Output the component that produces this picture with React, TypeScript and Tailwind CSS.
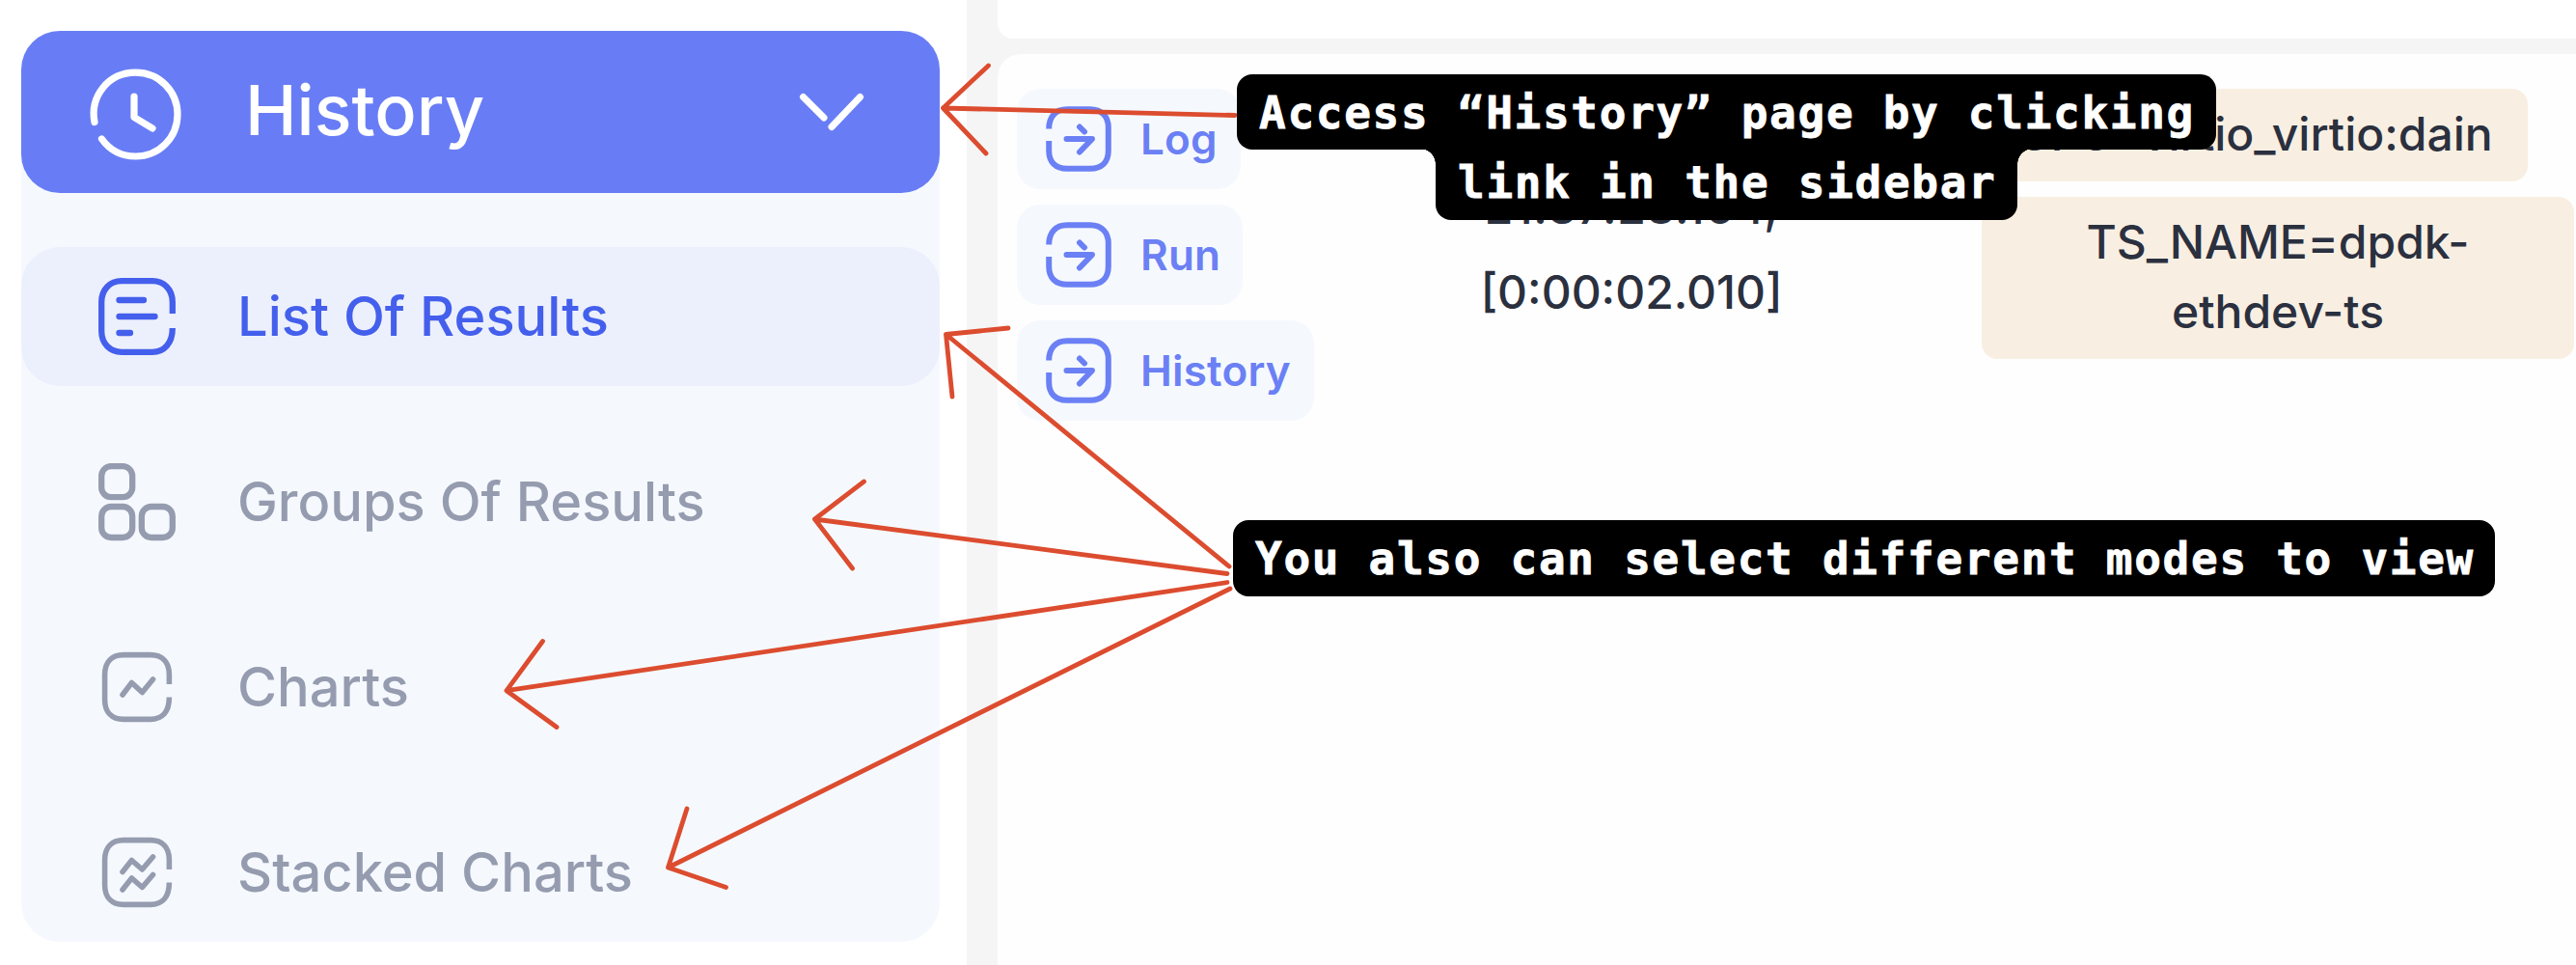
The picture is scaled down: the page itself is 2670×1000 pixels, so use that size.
import type { ReactNode } from "react";

const inter = "font-['Inter','Liberation_Sans',sans-serif]";
const mono =
  "font-['DejaVu_Sans_Mono','Liberation_Mono',monospace] text-[46px] leading-[72px] font-bold tracking-[1.7px] whitespace-nowrap text-white [-webkit-text-stroke:0.8px_white]";

function Icon({ size, stroke, className, children }: { size: number; stroke: number; className: string; children: ReactNode }) {
  return (
    <svg
      viewBox={`0 0 ${size} ${size}`}
      className={`overflow-visible ${className}`}
      fill="none"
      stroke="currentColor"
      strokeWidth={stroke}
      strokeLinecap="round"
      strokeLinejoin="round"
    >
      {children}
    </svg>
  );
}

function ListIcon() {
  return (
    <Icon size={96} stroke={6.3} className="size-24 shrink-0">
      <path strokeLinecap="butt" d="M84.8 45V33C84.8 20 76 11.2 64 11.2H32C20 11.2 11.2 20 11.2 33V63C11.2 76 20 84.8 32 84.8H64C76 84.8 84.8 76 84.8 60" />
      <path d="M29.5 31H55M29.5 48H66.5M29.5 65H41" />
    </Icon>
  );
}

function GroupsIcon() {
  return (
    <Icon size={96} stroke={6.3} className="size-24 shrink-0">
      <rect x="11.2" y="11.2" width="32" height="32" rx="10" />
      <rect x="11.2" y="53" width="32" height="32" rx="10" />
      <rect x="52.8" y="53" width="32" height="32" rx="10" />
    </Icon>
  );
}

function ChartsIcon() {
  return (
    <Icon size={96} stroke={5.6} className="size-24 shrink-0">
      <path strokeLinecap="butt" d="M81.4 45V35C81.4 22 74 14.6 62 14.6H34C22 14.6 14.6 22 14.6 35V61C14.6 74 22 81.4 34 81.4H62C74 81.4 81.4 74 81.4 58.5" />
      <path d="M33 56L42.5 43.5L53.4 53.5L64.5 40" />
    </Icon>
  );
}

function StackedIcon() {
  return (
    <Icon size={96} stroke={5.6} className="size-24 shrink-0">
      <path strokeLinecap="butt" d="M81.4 45V35C81.4 22 74 14.6 62 14.6H34C22 14.6 14.6 22 14.6 35V61C14.6 74 22 81.4 34 81.4H62C74 81.4 81.4 74 81.4 58.5" />
      <path d="M33 47.5L42.5 35.5L53.4 45L64.5 32M33 66L42.5 54L53.4 63.5L64.5 50.5" />
    </Icon>
  );
}

function NavItem({ icon, label, active }: { icon: ReactNode; label: string; active?: boolean }) {
  return (
    <div
      className={`flex h-36 items-center gap-14 rounded-[40px] pl-18 text-[56px] leading-none font-medium ${
        active ? "bg-[#ecf0fc] text-[#445fec]" : "text-[#969caf]"
      }`}
    >
      {icon}
      <span className="whitespace-nowrap">{label}</span>
    </div>
  );
}

function LinkButton({ label, width }: { label: string; width: string }) {
  return (
    <div className={`flex h-[104px] items-center rounded-3xl bg-[#f5f9fe] pl-[30px] text-[#6b80f4] ${width}`}>
      <Icon size={68} stroke={6} className="size-[68px] shrink-0">
        <path strokeLinecap="butt" d="M3.2 23.5C3.2 11 10 3.2 22 3.2H46C58 3.2 64.8 11 64.8 22V46C64.8 58 58 64.8 46 64.8H22C10 64.8 3.2 58 3.2 46V36" />
        <path d="M21.5 34H48L35 47.5M35 21.5L40 26.5" />
      </Icon>
      <span className="ml-[30px] text-[44px] leading-none font-semibold tracking-[0.2px]">{label}</span>
    </div>
  );
}

function Arrows() {
  return (
    <svg
      viewBox="0 0 2670 1000"
      className="absolute inset-0 h-[1000px] w-[2670px]"
      fill="none"
      stroke="#dc4c2f"
      strokeWidth="4.8"
      strokeLinecap="round"
      strokeLinejoin="round"
    >
      <path d="M1280 119.5L977.5 112M1024.5 68L977.5 112L1022 159" />
      <path d="M1274 587L980.5 346.5M1045 340L980.5 346.5L987 411" />
      <path d="M1272 594.5L844.5 538M895.5 499L844.5 538L883.5 589" />
      <path d="M1272 603.5L525 715.7M562.5 664.5L525 715.7L577 753.5" />
      <path d="M1275 610L692.5 899M712 838L692.5 899L752.5 919.5" />
    </svg>
  );
}

export default function App() {
  return (
    <div className={`relative flex h-[1000px] w-[2670px] overflow-hidden bg-[#f5f5f5] ${inter}`}>
      <aside className="h-full w-[1002px] shrink-0 bg-white pt-8 pl-[22px]">
        <nav className="h-[944px] w-[952px] rounded-[40px] bg-[#f5f9fe]">
          <div className="flex h-42 items-center rounded-[40px] bg-[#687df5] text-white">
            <Icon size={96} stroke={7.2} className="ml-[70px] size-24 shrink-0">
              <path d="M6 58.5C1 32 20 7.2 48.5 7.2C73 7.2 92 26.5 92 50.5C92 74.5 73 94 48.5 94C33 94 21 86.5 13.5 76" />
              <path d="M47 32V53.5L66 65" />
            </Icon>
            <span className="ml-[66px] pb-1 text-[72px] leading-none font-medium">History</span>
            <Icon size={72} stroke={7} className="mr-[76px] ml-auto size-18">
              <path d="M6.5 20.5L28 42M36 51.5L65.5 20.5" />
            </Icon>
          </div>
          <div className="mt-14 flex flex-col gap-12">
            <NavItem icon={<ListIcon />} label="List Of Results" active />
            <NavItem icon={<GroupsIcon />} label="Groups Of Results" />
            <NavItem icon={<ChartsIcon />} label="Charts" />
            <NavItem icon={<StackedIcon />} label="Stacked Charts" />
          </div>
        </nav>
      </aside>

      <main className="ml-8 flex flex-1 flex-col gap-4">
        <section className="h-10 rounded-bl-2xl bg-white" />
        <section className="flex flex-1 items-start rounded-tl-3xl bg-[#fefefe] pt-9 pl-5">
          <div className="flex w-[400px] shrink-0 flex-col items-start gap-4">
            <LinkButton label="Log" width="w-[232px]" />
            <LinkButton label="Run" width="w-[234px]" />
            <LinkButton label="History" width="w-[308px]" />
          </div>
          <div className="flex w-[474px] shrink-0 flex-col items-center pt-[79px] text-[48px] leading-[88px] font-medium text-[#2b303f]">
            <span className="tracking-[0.5px]">21:37:28.164,</span>
            <span>[0:00:02.010]</span>
          </div>
          <div className="ml-[126px] flex w-[614px] shrink-0 flex-col items-start gap-4 text-center text-[48px] leading-[72px] font-medium text-[#2b303f]">
            <div className="flex h-24 w-[566px] justify-center rounded-2xl bg-[#f8efe2] pt-[11px] whitespace-nowrap">
              CFG=virtio_virtio:dain
            </div>
            <div className="w-full rounded-2xl bg-[#f8efe2] px-9 pt-[11px] pb-[13px]">
              TS_NAME=dpdk-
              <br />
              ethdev-ts
            </div>
          </div>
        </section>
      </main>

      <Arrows />

      <div className={`absolute top-[77px] left-[1282px] flex w-[1015px] flex-col items-center ${mono}`}>
        <div className="relative z-10 h-[78px] w-full rounded-2xl bg-black pt-1 pl-[23px]">Access “History” page by clicking</div>
        <div className="relative -mt-4 h-[89px] w-[603px] rounded-b-2xl bg-black pt-[14px] pl-[23px]">
          link in the sidebar
          <span className="absolute top-[15px] right-full size-4 bg-[radial-gradient(circle_at_bottom_left,transparent_15.5px,black_16px)]" />
          <span className="absolute top-[15px] left-full size-4 bg-[radial-gradient(circle_at_bottom_right,transparent_15.5px,black_16px)]" />
        </div>
      </div>

      <div className={`absolute top-[539px] left-[1278px] h-[79px] w-[1308px] rounded-2xl bg-black pt-1 pl-[23px] ${mono}`}>
        You also can select different modes to view
      </div>
    </div>
  );
}
